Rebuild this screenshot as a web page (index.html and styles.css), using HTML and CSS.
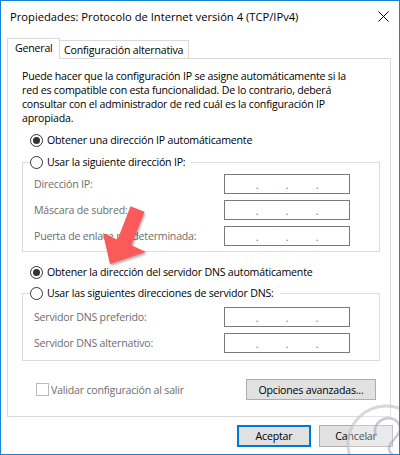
FILE: index.html
```html
<!DOCTYPE html>
<html lang="es">
<head>
<meta charset="utf-8">
<title>Propiedades: Protocolo de Internet versión 4 (TCP/IPv4)</title>
<link rel="stylesheet" href="styles.css">
</head>
<body>
<div class="window">
  <div class="titlebar">
    <span class="title">Propiedades: Protocolo de Internet versión 4 (TCP/IPv4)</span>
    <svg class="close" width="11" height="11" viewBox="0 0 11 11"><path d="M0.5 0.5 L10.5 10.5 M10.5 0.5 L0.5 10.5" stroke="#000" stroke-width="1" fill="none"/></svg>
  </div>
  <div class="tabs">
    <div class="tab active">General</div>
    <div class="tab">Configuración alternativa</div>
  </div>
  <div class="panel">
    <p class="intro">Puede hacer que la configuración IP se asigne automáticamente si la<br>red es compatible con esta funcionalidad. De lo contrario, deberá<br>consultar con el administrador de red cuál es la configuración IP<br>apropiada.</p>
    <div class="radio-row first"><span class="radio checked"></span><span>Obtener una dirección IP automáticamente</span></div>
    <fieldset class="group ip">
      <legend><span class="radio"></span><span>Usar la siguiente dirección IP:</span></legend>
      <div class="field"><span class="label">Dirección IP:</span><span class="ipbox"><i>.</i><i>.</i><i>.</i></span></div>
      <div class="field"><span class="label">Máscara de subred:</span><span class="ipbox"><i>.</i><i>.</i><i>.</i></span></div>
      <div class="field"><span class="label">Puerta de enlace predeterminada:</span><span class="ipbox"><i>.</i><i>.</i><i>.</i></span></div>
    </fieldset>
    <div class="radio-row dns"><span class="radio checked"></span><span>Obtener la dirección del servidor DNS automáticamente</span></div>
    <fieldset class="group dnsgroup">
      <legend><span class="radio"></span><span>Usar las siguientes direcciones de servidor DNS:</span></legend>
      <div class="field"><span class="label">Servidor DNS preferido:</span><span class="ipbox"><i>.</i><i>.</i><i>.</i></span></div>
      <div class="field"><span class="label">Servidor DNS alternativo:</span><span class="ipbox"><i>.</i><i>.</i><i>.</i></span></div>
    </fieldset>
    <div class="footer-row">
      <span class="check"><span class="box"></span><span>Validar configuración al salir</span></span>
      <button class="btn adv">Opciones avanzadas...</button>
    </div>
  </div>
  <div class="actions">
    <button class="btn primary">Aceptar</button>
    <button class="btn">Cancelar</button>
  </div>
  <svg class="arrow" width="400" height="455" viewBox="0 0 400 455">
    <polygon points="110,264 103,233 117.5,239.8 130.5,206.3 144.5,211.7 131.5,245.2 146,252" fill="#fb5a5a"/>
  </svg>
  <svg class="watermark" width="84" height="84" viewBox="0 0 84 84">
    <circle cx="42" cy="42" r="38" fill="rgba(255,255,255,0.3)" stroke="rgba(200,200,205,0.7)" stroke-width="3"/>
    <path d="M32 34 C26 18 48 10 55 22 C60 32 46 38 45 46 C44 54 54 52 50 60 C46 66 38 64 42 58" fill="none" stroke="rgba(150,160,185,0.55)" stroke-width="2.5"/>
  </svg>
</div>
</body>
</html>
```
FILE: styles.css
```css
html, body {
  margin: 0;
  padding: 0;
  background: #ffffff;
}
.window {
  position: relative;
  width: 400px;
  height: 455px;
  box-sizing: border-box;
  border: 1px solid #1883d7;
  background: #ffffff;
  font-family: "Open Sans", "Noto Sans", sans-serif;
  font-size: 10.6px;
  letter-spacing: -0.2px;
  color: #000;
  overflow: hidden;
}
.titlebar {
  display: flex;
  align-items: center;
  height: 30px;
  padding-left: 9px;
  padding-right: 10px;
}
.title {
  font-size: 11.2px;
  letter-spacing: 0;
  white-space: nowrap;
}
.close {
  margin-left: auto;
}
.tabs {
  display: flex;
  align-items: flex-end;
  margin: 7px 0 0 6px;
  height: 20px;
  position: relative;
  z-index: 1;
}
.tab {
  box-sizing: border-box;
  border: 1px solid #d9d9d9;
  border-bottom: none;
  background: #fff;
  line-height: 16px;
  white-space: nowrap;
}
.tab.active {
  height: 21px;
  margin-bottom: -1px;
  padding: 1px 7px 0 7px;
  width: 53px;
}
.tab:not(.active) {
  height: 18px;
  border-left: none;
  padding: 1px 0 0 4px;
  width: 129px;
}
.panel {
  box-sizing: border-box;
  width: 384px;
  height: 359px;
  margin-left: 6px;
  border: 1px solid #d9d9d9;
  padding: 10px 10px 13px 14px;
}
.intro {
  margin: 0;
  line-height: 14px;
}
.radio-row {
  display: flex;
  align-items: center;
  height: 16px;
  padding-left: 8px;
  white-space: nowrap;
}
.radio-row.first {
  margin-top: 7px;
}
.radio-row.dns {
  margin-top: 12px;
}
.radio {
  box-sizing: border-box;
  width: 13px;
  height: 13px;
  border: 1px solid #333;
  border-radius: 50%;
  margin-right: 4px;
  display: flex;
  align-items: center;
  justify-content: center;
  background: #fff;
  flex: none;
}
.radio.checked::after {
  content: "";
  width: 7px;
  height: 7px;
  border-radius: 50%;
  background: #333;
}
.group {
  margin: 6px 0 0 0;
  border: 1px solid #dcdcdc;
  padding: 4px 0 5px 11px;
  min-width: 0;
}
.group legend {
  display: flex;
  align-items: center;
  height: 16px;
  padding: 0 6px 0 0;
  margin-left: -4px;
  white-space: nowrap;
}
.dnsgroup {
  margin-top: 5px;
  padding-top: 6px;
  padding-bottom: 7px;
}
.field {
  display: flex;
  align-items: center;
  height: 20px;
  color: #6d6d6d;
  white-space: nowrap;
}
.field + .field {
  margin-top: 6px;
}
.label {
  width: 190px;
}
.ipbox {
  box-sizing: border-box;
  width: 126px;
  height: 20px;
  border: 1px solid #7a7a7a;
  display: flex;
  padding-left: 17px;
  line-height: 20px;
}
.ipbox i {
  font-style: normal;
  width: 30px;
  text-align: center;
  color: #6d6d6d;
}
.footer-row {
  display: flex;
  align-items: center;
  justify-content: space-between;
  margin-top: 18px;
  padding-right: 4px;
}
.check {
  display: flex;
  align-items: center;
  color: #6d6d6d;
  padding-left: 14px;
  white-space: nowrap;
}
.box {
  box-sizing: border-box;
  width: 13px;
  height: 13px;
  border: 1px solid #bcbcbc;
  margin-right: 2px;
}
.btn {
  font-family: inherit;
  font-size: 10.6px;
  letter-spacing: -0.2px;
  color: #000;
  background: #e1e1e1;
  border: 1px solid #adadad;
  padding: 0;
  box-sizing: border-box;
  margin: 0;
  white-space: nowrap;
}
.adv {
  width: 130px;
  height: 21px;
}
.actions {
  display: flex;
  justify-content: flex-end;
  gap: 8px;
  margin-top: 8px;
  padding-right: 6px;
}
.actions .btn {
  width: 74px;
  height: 22px;
}
.btn.primary {
  border: 2px solid #0078d7;
}
.arrow {
  position: absolute;
  left: -1px;
  top: -1px;
  pointer-events: none;
  filter: drop-shadow(1px 2px 1px rgba(0,0,0,0.3));
}
.watermark {
  position: absolute;
  left: 343px;
  top: 401px;
  pointer-events: none;
}
```
